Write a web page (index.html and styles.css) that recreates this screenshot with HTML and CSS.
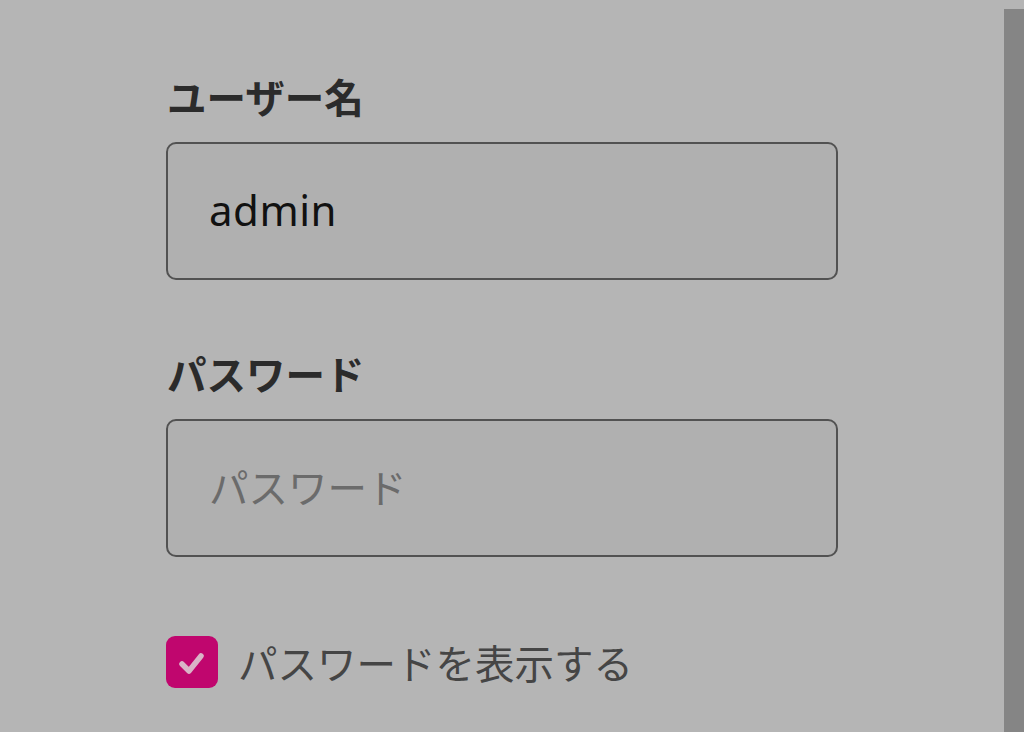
FILE: index.html
```html
<!DOCTYPE html>
<html lang="ja">
<head>
<meta charset="utf-8">
<link rel="stylesheet" href="styles.css">
</head>
<body>
<div class="page">
  <main class="form">
    <label class="label" for="user">ユーザー名</label>
    <div class="field"><input id="user" class="input" type="text" value="admin"></div>
    <label class="label label-second" for="pass">パスワード</label>
    <div class="field"><input id="pass" class="input" type="text" placeholder="パスワード"></div>
    <div class="check-row">
      <span class="checkbox">
        <svg viewBox="0 0 52 52" width="52" height="52"><path d="M16 28 L23 35 L35 20" fill="none" stroke="#d9b4c7" stroke-width="5.5" stroke-linecap="round" stroke-linejoin="round"/></svg>
      </span>
      <span class="check-label">パスワードを表示する</span>
    </div>
  </main>
  <aside class="side"></aside>
</div>
</body>
</html>
```
FILE: styles.css
```css
html, body {
  margin: 0;
  padding: 0;
  height: 100%;
  background: #b5b5b5;
  overflow: hidden;
}
.page {
  display: flex;
  height: 732px;
}
.form {
  flex: 1;
  display: flex;
  flex-direction: column;
  padding: 76px 0 0 166px;
  font-family: "Noto Sans CJK JP", "Noto Sans", sans-serif;
}
.label {
  font-size: 39.5px;
  line-height: 40px;
  font-weight: 700;
  color: #2b2b2b;
  margin: 0 0 26px 1px;
}
.label-second {
  margin-top: 73px;
  margin-bottom: 26px;
}
.field {
  width: 672px;
}
.input {
  box-sizing: border-box;
  width: 672px;
  height: 138px;
  margin: 0;
  border: 2px solid #525252;
  border-radius: 10px;
  background: #b0b0b0;
  padding: 0 0 4px 41px;
  font-family: "Noto Sans", "Noto Sans CJK JP", sans-serif;
  font-size: 42px;
  letter-spacing: 0.5px;
  color: #111;
  outline: none;
}
.input::placeholder {
  font-family: "Noto Sans CJK JP", sans-serif;
  color: #6b6b6b;
  font-size: 39.5px;
  letter-spacing: 0;
}
.check-row {
  display: flex;
  align-items: center;
  margin-top: 79px;
}
.checkbox {
  width: 52px;
  height: 52px;
  border-radius: 9px;
  background: #c0066e;
  display: flex;
}
.check-label {
  margin-left: 20px;
  font-size: 39.5px;
  line-height: 52px;
  color: #454545;
}
.side {
  width: 20px;
  margin-top: 9px;
  background: #858585;
}
```
